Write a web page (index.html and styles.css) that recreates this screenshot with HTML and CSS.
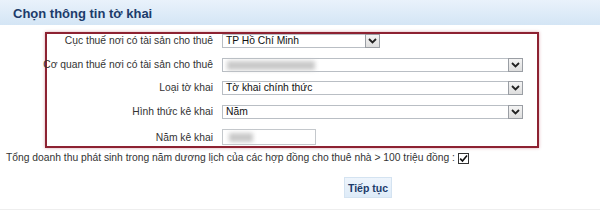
FILE: index.html
```html
<!DOCTYPE html>
<html lang="vi">
<head>
    <meta charset="UTF-8">
    <meta name="viewport" content="width=device-width, initial-scale=1.0">
    <link rel="stylesheet" href="styles.css">
    <title>Chọn thông tin tờ khai</title>
</head>
<body class="page">
    <div class="panel-head">Chọn thông tin tờ khai</div>

    <div class="choose-box">
        <div class="row">
            <label class="lbl">Cục thuế nơi có tài sản cho thuê</label>
            <div class="combo combo-short">
                <span class="combo-text">TP Hồ Chí Minh</span>
                <span class="combo-arrow"><svg width="9" height="6" viewBox="0 0 9 6"><path d="M1 1 L4.5 4.5 L8 1" fill="none" stroke="#222" stroke-width="1.8"/></svg></span>
            </div>
        </div>
        <div class="row">
            <label class="lbl">Cơ quan thuế nơi có tài sản cho thuê</label>
            <div class="combo">
                <span class="combo-text"><span class="blur blur-long"></span></span>
                <span class="combo-arrow"><svg width="9" height="6" viewBox="0 0 9 6"><path d="M1 1 L4.5 4.5 L8 1" fill="none" stroke="#222" stroke-width="1.8"/></svg></span>
            </div>
        </div>
        <div class="row">
            <label class="lbl">Loại tờ khai</label>
            <div class="combo">
                <span class="combo-text">Tờ khai chính thức</span>
                <span class="combo-arrow"><svg width="9" height="6" viewBox="0 0 9 6"><path d="M1 1 L4.5 4.5 L8 1" fill="none" stroke="#222" stroke-width="1.8"/></svg></span>
            </div>
        </div>
        <div class="row">
            <label class="lbl">Hình thức kê khai</label>
            <div class="combo">
                <span class="combo-text">Năm</span>
                <span class="combo-arrow"><svg width="9" height="6" viewBox="0 0 9 6"><path d="M1 1 L4.5 4.5 L8 1" fill="none" stroke="#222" stroke-width="1.8"/></svg></span>
            </div>
        </div>
        <div class="row">
            <label class="lbl lbl-input">Năm kê khai</label>
            <div class="textbox"><span class="blur blur-short"></span></div>
        </div>
    </div>

    <p class="total-line">Tổng doanh thu phát sinh trong năm dương lịch của các hợp đồng cho thuê nhà &gt; 100 triệu đồng : <span class="check"><svg width="9" height="9" viewBox="0 0 9 9"><path d="M1.2 4.6 L3.5 7 L8 1.6" fill="none" stroke="#111" stroke-width="1.6"/></svg></span></p>

    <div class="actions">
        <button class="next-btn">Tiếp tục</button>
    </div>
    <div class="bottom-rule"></div>
</body>
</html>
```

FILE: styles.css
```css
*{
    margin: 0;
    padding: 0;
    box-sizing: border-box;
}
.page{
    width: 600px;
    height: 213px;
    overflow: hidden;
    background: #fff;
    font-family: "Liberation Sans", Arial, sans-serif;
    font-size: 10.3px;
    color: #333;
}
.panel-head{
    height: 25px;
    padding: 6px 0 0 13px;
    background: linear-gradient(to bottom, #e9f2fb, #d4e5f5);
    color: #1c3b6a;
    font-weight: bold;
    font-size: 13px;
}
.choose-box{
    margin: 7px 0 0 45px;
    width: 494px;
    height: 116px;
    border: 2px solid #8d2232;
    box-shadow: 0 0 3px rgba(170, 60, 80, 0.45);
}
.row{
    display: flex;
    align-items: flex-start;
    height: 23.7px;
}
.lbl{
    width: 166px;
    flex: none;
    text-align: right;
    white-space: nowrap;
    direction: rtl;
    margin-right: 9px;
    line-height: 14px;
    color: #333;
}
.lbl-input{
    line-height: 17px;
}
.combo{
    display: flex;
    width: 301px;
    height: 14px;
    border: 1px solid #b9bec4;
    background: #fff;
}
.combo-short{
    width: 158px;
}
.combo-text{
    flex: 1;
    padding-left: 3px;
    line-height: 12px;
    color: #111;
    position: relative;
}
.combo-arrow{
    width: 15px;
    height: 14px;
    margin-top: -1px;
    margin-right: -1px;
    border: 1px solid #9a9ea4;
    background: linear-gradient(to bottom, #f4f4f4, #dedede);
    display: flex;
    align-items: center;
    justify-content: center;
}
.textbox{
    width: 94px;
    height: 16px;
    border: 1px solid #c4c8cc;
    position: relative;
}
.blur{
    position: absolute;
    top: 2px;
    height: 9px;
    background: #c9c9c9;
    filter: blur(2px);
}
.blur-long{
    left: 4px;
    width: 88px;
}
.blur-short{
    left: 6px;
    width: 24px;
    top: 3px;
}
.total-line{
    margin: 2px 0 0 6px;
    white-space: nowrap;
    color: #333;
    line-height: 15px;
}
.check{
    display: inline-flex;
    width: 11px;
    height: 11px;
    border: 1px solid #333;
    align-items: center;
    justify-content: center;
    vertical-align: -2px;
    background: #fff;
}
.actions{
    padding: 12px 0 0 344px;
}
.next-btn{
    width: 48px;
    height: 21px;
    border: 1px solid #d4e3f1;
    background: linear-gradient(to bottom, #eef5fc, #deebf8);
    color: #1c3b6a;
    font-family: "Liberation Sans", Arial, sans-serif;
    font-weight: bold;
    font-size: 10.5px;
}
.bottom-rule{
    margin-top: 11px;
    height: 1px;
    background: #eeeeee;
}
```
